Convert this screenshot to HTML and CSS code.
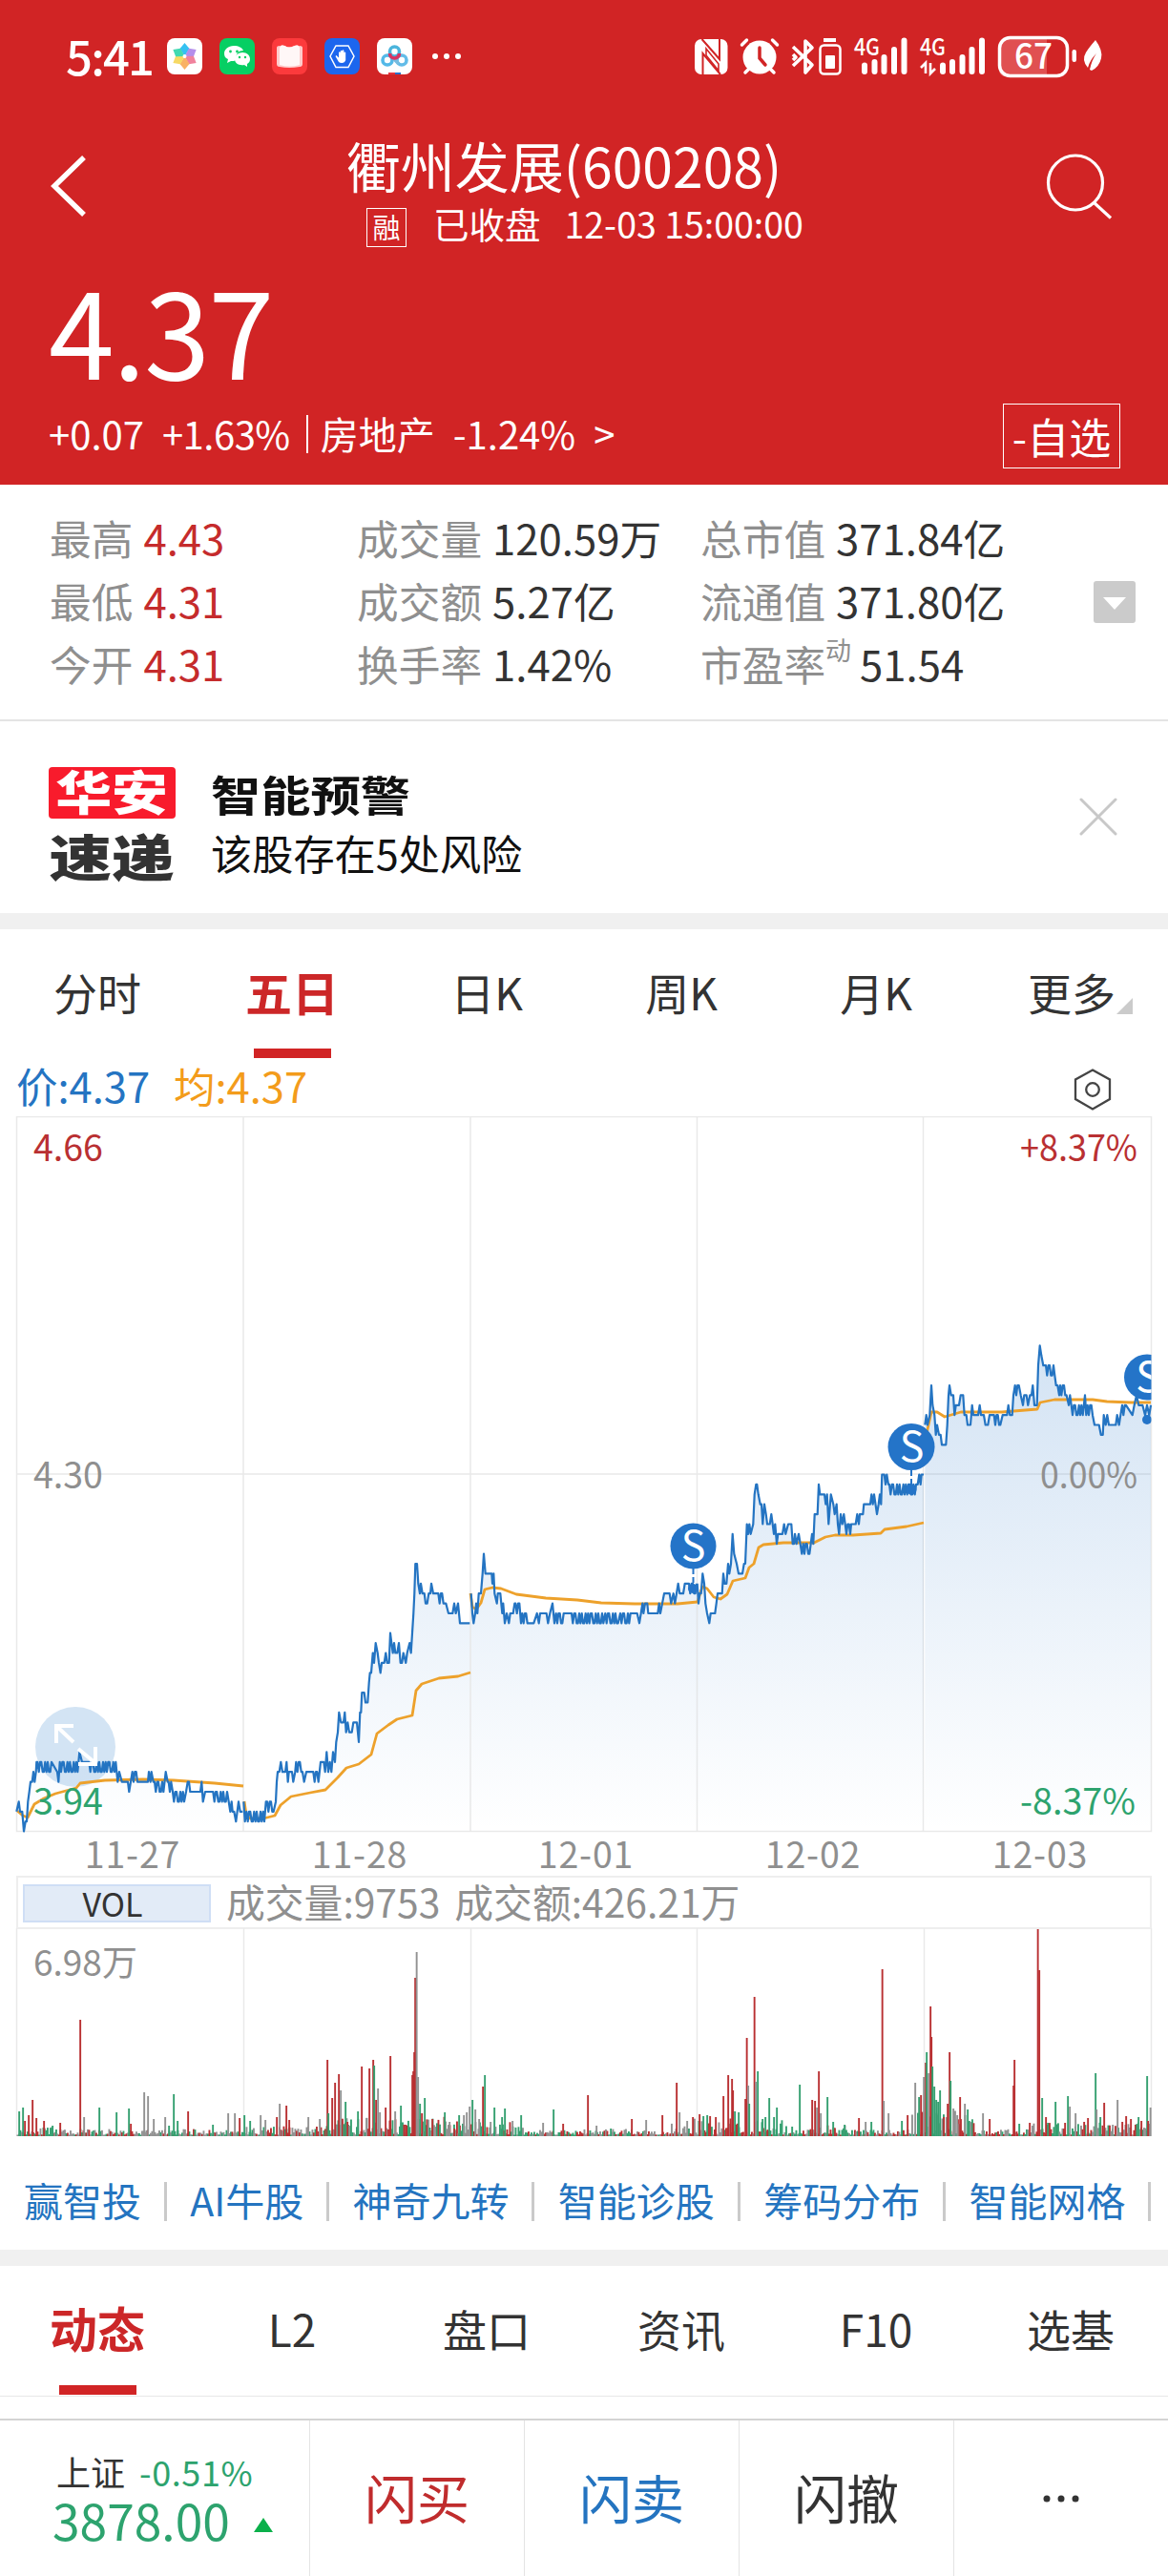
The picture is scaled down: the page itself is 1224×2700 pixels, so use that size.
FILE: index.html
```html
<!DOCTYPE html>
<html lang="zh-CN">
<head>
<meta charset="utf-8">
<title>衢州发展(600208)</title>
<link rel="stylesheet" href="styles.css">
</head>
<body>
<header class="hero">
  <div class="status">
    <span class="clock">5:41</span>
    <svg class="apps" width="315" height="40" viewBox="172 39 315 40">
      <rect x="175" y="40" width="37" height="38" rx="8" fill="#fff"/>
      <g transform="translate(193.500 59)" opacity=".85">
        <path d="M0 0L-5 -8L0 -14L5 -8Z" fill="#12b7f0"/>
        <path d="M0 0L-5 -8L0 -14L5 -8Z" fill="#a77be8" transform="rotate(60)"/>
        <path d="M0 0L-5 -8L0 -14L5 -8Z" fill="#ee6d8c" transform="rotate(120)"/>
        <path d="M0 0L-5 -8L0 -14L5 -8Z" fill="#f9a54a" transform="rotate(180)"/>
        <path d="M0 0L-5 -8L0 -14L5 -8Z" fill="#f5d34a" transform="rotate(240)"/>
        <path d="M0 0L-5 -8L0 -14L5 -8Z" fill="#1fd3a5" transform="rotate(300)"/>
        <circle r="2" fill="#fff"/>
      </g>
      <rect x="230" y="40" width="37" height="38" rx="8" fill="#06cf63"/>
      <path d="M245 48c-6 0-10 4-10 8 0 3 1 5 4 6l-1 4 4-2c2 0 4 0 5-1 0-7 3-10 8-10-1-3-5-5-10-5z" fill="#fff"/>
      <path d="M254 55c5 0 8 3 8 7 0 2-1 4-3 5v3l-3-2c-6 1-10-2-10-6 0-4 4-7 8-7z" fill="#fff"/>
      <g fill="#06cf63"><circle cx="241.500" cy="54" r="1.400"/><circle cx="248.500" cy="54" r="1.400"/><circle cx="251" cy="60" r="1.200"/><circle cx="257" cy="60" r="1.200"/></g>
      <rect x="285" y="40" width="37" height="38" rx="8" fill="#fc3a3c"/>
      <path d="M290 50q0-2 3-2l2 1q1-2 4-1 3 3 9 0 3-1 4 1l2-1q3 0 3 2v17q0 3-3 3-11 2-21 0-3 0-3-3z" fill="#fcc" />
      <path d="M293 50q1-4 5-2 5 3 11 0 4-2 5 2v18q-10 3-21 0z" fill="#fff7f7"/>
      <rect x="340" y="40" width="37" height="38" rx="8" fill="#1c66ee"/>
      <path d="M352 48h13l6 11-6 11.500h-13l-6-11.500z" fill="none" stroke="#fff" stroke-width="1.500"/>
      <path d="M355 65l-3.500-6 1-1 2.500 2.500V55q1-1.500 1.800 0v4-5.500q1-1.500 1.800 0v5-5.500q1-1.500 1.800 0v6-4q1-1.200 1.800 0v8q-1 3-4 3-2 0-3.200-1z" fill="#fff"/>
      <rect x="395" y="40" width="37" height="38" rx="8" fill="#fff"/>
      <g fill="none" stroke-width="3.600"><circle cx="406" cy="63" r="5" stroke="#54b9e8"/><circle cx="421" cy="63" r="5" stroke="#62bce8"/><path d="M409 58l9 9" stroke="#77bce0"/><circle cx="413.500" cy="54" r="5" stroke="#4ab4dc"/><path d="M408.500 56a5 5 0 0 0 10 0" stroke="#d93462"/></g>
      <path d="M407 76h7v2h-7z" fill="#e4343c"/><path d="M414 76h6v2h-6z" fill="#2770c9"/>
      <g fill="#fff"><circle cx="456" cy="59" r="3"/><circle cx="468" cy="59" r="3"/><circle cx="480" cy="59" r="3"/></g>
    </svg>
    <svg class="system" width="436" height="46" viewBox="724 37 436 46">
      <rect x="728" y="41" width="34.500" height="37" rx="7" fill="#fff"/>
      <path d="M735.500 41L754 62V41M736.500 78V56L755 78" fill="none" stroke="#d12425" stroke-width="2"/>
      <path d="M740 51l13 16v7l-13-16z" fill="#fff" stroke="#d12425" stroke-width="1.600"/>
      <g stroke="#fff" fill="none" stroke-linecap="round"><circle cx="796" cy="60" r="17.500" fill="#fff" stroke="none"/><path d="M777.500 47l5-5M814.500 47l-5-5M781 76l4-4M811 76l-4-4" stroke-width="3.500"/><path d="M796 50v11l6 7" stroke="#d12425" stroke-width="3.500"/></g>
      <path d="M831 49l20 19-7 8V43l7 7-20 19M831 57l3 3-3 3" fill="none" stroke="#fff" stroke-width="3.600" stroke-linejoin="round"/>
      <path d="M863 40h13v4h-13z" fill="#fff"/><rect x="859.500" y="47.500" width="21" height="30" rx="4" fill="none" stroke="#fff" stroke-width="2.500"/><rect x="865" y="58" width="10" height="14" rx="1" fill="#fff"/>
      <text x="895" y="58" class="net" textLength="27" lengthAdjust="spacingAndGlyphs">4G</text>
      <text x="964" y="58" class="net" textLength="27" lengthAdjust="spacingAndGlyphs">4G</text>
      <g stroke="#fff" stroke-width="6" stroke-linecap="round"><path d="M906 68.500V75M916.500 65V75M926.500 60V75M937 52V75M947.500 42.500V75M988 68.500V75M998 65V75M1008.500 60V75M1018.500 52V75M1029 42.500V75"/></g>
      <path d="M965 71l5-5v11M980 72l-5 5v-11" fill="none" stroke="#fff" stroke-width="2.600"/>
      <path d="M1053 40h44v40h-44q-6 0-6-8V48q0-8 6-8z" fill="#e05051"/>
      <rect x="1047.500" y="39.500" width="71" height="40" rx="11" fill="none" stroke="#fff" stroke-width="3.500"/>
      <text x="1063" y="72" class="charge" textLength="40" lengthAdjust="spacingAndGlyphs">67</text>
      <rect x="1123.500" y="52" width="4.500" height="13" rx="2.200" fill="#fff"/>
      <path d="M1148 42q8 11 6 19-2 9-10 13l-2-1q2-10 7-17-7 7-9 15-7-8-2-16 3-5 10-13z" fill="#fff"/>
    </svg>
  </div>
  <nav class="bar">
    <svg class="back" width="44" height="70" viewBox="50 160 44 70"><path d="M88 165L57 195l31 30" fill="none" stroke="#fff" stroke-width="5.500"/></svg>
    <div class="heading">
      <h1>衢州发展(600208)</h1>
      <p><i>融</i><span>已收盘</span><span>12-03 15:00:00</span></p>
    </div>
    <svg class="search" width="76" height="76" viewBox="1094 156 76 76"><g fill="none" stroke="#fff" stroke-width="3.200"><circle cx="1127" cy="191.500" r="28.500"/><path d="M1146 212l18 16.500"/></g></svg>
  </nav>
  <div class="price">4.37</div>
  <div class="change"><span>+0.07</span><span class="pct">+1.63%</span><b></b><span>房地产</span><span>-1.24%</span><span>&gt;</span><button>-自选</button></div>
</header>

<section class="stats">
  <dl>
    <div><dt>最高</dt><dd class="up">4.43</dd></div>
    <div><dt>最低</dt><dd class="up">4.31</dd></div>
    <div><dt>今开</dt><dd class="up">4.31</dd></div>
  </dl>
  <dl>
    <div><dt>成交量</dt><dd>120.59万</dd></div>
    <div><dt>成交额</dt><dd>5.27亿</dd></div>
    <div><dt>换手率</dt><dd>1.42%</dd></div>
  </dl>
  <dl>
    <div><dt>总市值</dt><dd>371.84亿</dd></div>
    <div><dt>流通值</dt><dd>371.80亿</dd></div>
    <div><dt>市盈率<sup>动</sup></dt><dd>51.54</dd></div>
  </dl>
  <svg class="expand" width="44" height="44" viewBox="0 0 44 44"><rect width="44" height="44" rx="3" fill="#cbcbcb"/><path d="M10 17h24L22 30z" fill="#fff"/></svg>
</section>

<section class="alert">
  <div class="logo"><span class="logo-a"><em>华安</em></span><span class="logo-b"><em>速递</em></span></div>
  <div class="alert-text"><h2><em>智能预警</em></h2><p>该股存在5处风险</p></div>
  <svg class="close" width="40" height="40" viewBox="0 0 40 40"><path d="M2 2l36 36M38 2L2 38" stroke="#c8c8c8" stroke-width="3" stroke-linecap="round"/></svg>
</section>

<nav class="tabs">
  <a>分时</a><a class="on">五日</a><a>日K</a><a>周K</a><a>月K</a><a class="more">更多<svg width="17" height="17" viewBox="0 0 17 17"><path d="M17 0v17H0z" fill="#cbcbcb"/></svg></a>
</nav>
<div class="legend"><span class="now">价:4.37</span><span class="avg">均:4.37</span>
  <svg width="42" height="46" viewBox="0 0 42 46"><g fill="none" stroke="#444" stroke-width="2.300"><path d="M21 2.500L39 12.500v20.500L21 43.500 3 33V12.500z"/><circle cx="21" cy="23" r="6.800"/></g></svg>
</div>
<svg id="trend" class="chart" width="1224" height="796" viewBox="0 1170 1224 796">
  <defs>
    <linearGradient id="fade" gradientUnits="userSpaceOnUse" x1="0" y1="1410" x2="0" y2="1919"><stop offset="0" stop-color="#2474c8" stop-opacity=".2"/><stop offset="1" stop-color="#2474c8" stop-opacity="0"/></linearGradient>
    <clipPath id="plot"><rect x="17" y="1170" width="1189.500" height="750"/></clipPath>
  </defs>
  <g class="grid"><path d="M17.500 1170.500h1189v749h-1189zM255 1170v749M493 1170v749M730.500 1170v749M967.500 1170v749M17 1545h1189" /></g>
  <circle cx="79" cy="1831" r="42" fill="#d3e4f4"/>
  <g id="lines"></g>
  <g clip-path="url(#plot)" class="marks">
    <path d="M726.500 1644v20M955 1541v20" class="drop"/>
    <circle cx="726.500" cy="1620.500" r="24"/><circle cx="955" cy="1516.500" r="24.500"/><circle cx="1202" cy="1443.500" r="24"/>
    <circle cx="726" cy="1665" r="5"/><circle cx="955" cy="1561" r="5.500"/><circle cx="1202" cy="1488" r="5"/>
    <text x="726.500" y="1635.500">S</text><text x="955.500" y="1531.500">S</text><text x="1203" y="1458.500">S</text>
  </g>
  <path d="M77 1826l-18-17M59 1827v-18h18M82 1833l18 15M100 1831v18h-18" fill="none" stroke="#fff" stroke-width="4"/>
  <g class="scale">
    <text x="35" y="1217" class="r">4.66</text><text x="35" y="1560">4.30</text><text x="35" y="1902" class="g">3.94</text>
    <text x="1069" y="1217" class="r" textLength="123" lengthAdjust="spacingAndGlyphs">+8.37%</text><text x="1090" y="1560" textLength="102" lengthAdjust="spacingAndGlyphs">0.00%</text><text x="1069" y="1902" class="g" textLength="121" lengthAdjust="spacingAndGlyphs">-8.37%</text>
  </g>
  <g class="scale m"><text x="139" y="1958">11-27</text><text x="377" y="1958">11-28</text><text x="614" y="1958">12-01</text><text x="852" y="1958">12-02</text><text x="1090" y="1958">12-03</text></g>
</svg>
<div class="vol"><button>VOL</button><span>成交量:9753</span><span>成交额:426.21万</span></div>
<svg class="chart" width="1224" height="219" viewBox="0 2021 1224 219">
  <g class="grid"><path d="M17.500 2021v218M255.500 2021v218M493.500 2021v218M730.500 2021v218M968.500 2021v218M1206.500 2021v218"/></g>
  <g id="bars"></g>
  <text x="35" y="2071" class="volmax">6.98万</text>
</svg>
<nav class="links"><a>赢智投</a><a>AI牛股</a><a>神奇九转</a><a>智能诊股</a><a>筹码分布</a><a>智能网格</a></nav>
<nav class="tabs low"><a class="on">动态</a><a>L2</a><a>盘口</a><a>资讯</a><a>F10</a><a>选基</a></nav>
<footer>
  <div class="index"><p>上证 <span>-0.51%</span></p><p class="points">3878.00<svg width="20" height="15" viewBox="0 0 20 15"><path d="M10 0l10 15H0z" fill="#0bb04a"/></svg></p></div>
  <a class="buy">闪买</a><a class="sell">闪卖</a><a>闪撤</a><a class="dots"><svg width="40" height="10" viewBox="0 0 40 10"><g fill="#333"><circle cx="5" cy="5" r="3.500"/><circle cx="20" cy="5" r="3.500"/><circle cx="35" cy="5" r="3.500"/></g></svg></a>
</footer>
<script src="chart.js"></script>
</body>
</html>
```

FILE: styles.css
```css
* { box-sizing: border-box; margin: 0; padding: 0; }
body { width: 1224px; background: #fff; color: #333; font-family: "Noto Sans CJK SC", "Noto Sans", sans-serif; overflow-x: hidden; }
svg { display: block; flex: none; }
em, i { font-style: normal; }
button { font-family: inherit; color: inherit; background: none; }

.hero { height: 508px; background: #d12425; color: #fff; }
.status { height: 118px; display: flex; align-items: flex-start; padding-left: 69px; }
.clock { width: 103px; font-size: 49px; font-weight: 500; line-height: 115px; letter-spacing: -1.800px; }
.apps { margin-top: 39px; }
.system { margin: 37px 0 0 237px; overflow: visible; }
.net { font-size: 24px; font-weight: 500; fill: #fff; }
.charge { font-size: 36px; font-weight: 500; fill: #fff; }

.bar { height: 150px; display: flex; align-items: flex-start; padding: 16px 54px 0 50px; }
.back { margin-top: 26px; }
.search { margin: 22px 0 0 auto; }
.heading { width: 500px; margin-left: 247px; white-space: nowrap; }
.heading h1 { font-size: 57px; font-weight: 400; line-height: 76px; text-align: center; }
.heading p { display: flex; font-size: 37.500px; line-height: 47px; padding-left: 43px; }
.heading i { width: 42px; height: 41px; flex: none; margin: 8px 28px 0 0; border: 1.500px solid #fff; font-size: 29px; line-height: 37px; text-align: center; }
.heading span + span { margin-left: 25px; }

.price { height: 153px; padding-left: 51px; font-size: 124px; line-height: 153px; letter-spacing: -1.500px; }
.change { height: 70px; display: flex; padding-left: 51px; font-size: 40px; line-height: 67px; white-space: nowrap; }
.change span + span { margin-left: 19px; }
.change .pct { letter-spacing: -.500px; }
.change b { width: 2px; height: 40px; margin: 14px 13px 0 17px; background: #fff; }
.change button { width: 123px; height: 68px; margin: 2px 50px 0 auto; border: 1.500px solid #fff; font-size: 44px; line-height: 58px; }

.stats { height: 248px; display: grid; grid-template-columns: 322px 360px 412px 44px; padding: 22px 0 0 52px; border-bottom: 2px solid #e4e4e4; font-size: 43.700px; line-height: 66px; }
.stats dl div { display: flex; white-space: nowrap; }
.stats dt { color: #8f8f8f; margin-right: 11px; }
.stats dd.up { color: #c52b2c; }
.stats sup { font-size: 27px; line-height: 0; vertical-align: 22px; margin-right: -2px; }
.expand { margin-top: 79px; }

.alert { height: 218px; display: flex; border-bottom: 17px solid #f0f0f0; padding-left: 51px; color: #111; }
.logo { width: 133px; margin-top: 48px; font-weight: 900; text-align: center; }
.logo span { display: flex; justify-content: center; height: 54px; line-height: 48px; border-radius: 4px; font-size: 49px; }
.logo em { transform: scaleX(1.200); transform-origin: center; }
.logo .logo-a { background: #f81b2c; color: #fff; }
.logo .logo-b { margin-top: 14px; color: #333; font-size: 52px; line-height: 50px; }
.logo .logo-b em { transform: scaleX(1.260); }
.alert-text { margin-left: 37px; padding-top: 46px; }
.alert-text h2 { font-size: 44.500px; font-weight: 700; line-height: 60px; }
.alert-text em { display: inline-block; transform: scaleX(1.175); transform-origin: 0 50%; }
.alert-text p { font-size: 43.200px; line-height: 62px; }
.close { margin: 80px 53px 0 auto; }

.tabs { height: 135px; display: grid; grid-template-columns: repeat(6, 204px); font-size: 46px; line-height: 131px; text-align: center; }
.tabs a { display: flex; flex-direction: column; align-items: center; height: 135px; }
.tabs .on { color: #cc2728; font-weight: 700; font-size: 49px; line-height: 129px; }
.tabs .on::after { content: ""; width: 81px; height: 10px; margin-top: -4px; background: #d12425; }
.tabs .more { flex-direction: row; align-items: flex-start; padding-left: 57px; }
.more svg { margin: 72px 0 0 1px; }

.legend { height: 61px; display: flex; align-items: flex-start; padding: 0 58px 0 17px; font-size: 43.500px; line-height: 58px; }
.now { color: #2474c2; width: 165px; }
.avg { color: #f39c1b; }
.legend svg { margin: 10px 0 0 auto; }

.grid path { fill: none; stroke: #e9e9e9; stroke-width: 1.500px; }
.trend { fill: none; stroke: #2474c2; stroke-width: 2.200px; stroke-linejoin: round; }
.mean { fill: none; stroke: #eda12b; stroke-width: 2.800px; stroke-linejoin: round; }
.marks circle { fill: #2474c8; }
.marks text { fill: #fff; font-size: 43px; text-anchor: middle; }
.drop { fill: none; stroke: #2474c8; stroke-width: 2px; stroke-dasharray: 6 3; }
.scale { font-size: 37.500px; fill: #8f8f8f; }
.scale .r { fill: #b93032; }
.scale .g { fill: #2da36e; }
.m { text-anchor: middle; letter-spacing: .800px; }
.volmax { font-size: 37px; fill: #8f8f8f; }

.vol { height: 56px; width: 1190px; margin: 0 0 -1px 17px; display: flex; border: 2px solid #eeeeee; font-size: 40.800px; line-height: 49px; color: #8f8f8f; white-space: nowrap; }
.vol button { width: 197px; height: 40px; margin: 7px 11px 0 5px; background: #e2ebf7; border: 2px solid #cfdef5; color: #333; font-size: 34px; line-height: 32px; padding-right: 9px; }
.vol span { padding-left: 5px; }
.vol span + span { padding-left: 15px; }

.links { height: 118px; display: flex; align-items: flex-start; padding: 26px 0 0 25px; font-size: 41px; line-height: 78px; color: #2474c0; white-space: nowrap; }
.links a { display: flex; align-items: center; margin-right: 24.500px; }
.links a::after { content: ""; width: 3px; height: 41px; margin: 5px 0 0 23.800px; background: #cacaca; }

.low { height: 154px; border-top: 17px solid #f0f0f0; border-bottom: 1px solid #e8e8e8; }
.low .on { font-size: 50px; }

footer { height: 165px; margin-top: 23px; border-top: 2.500px solid #d4d4d4; display: grid; grid-template-columns: 324px repeat(4, 225px); font-size: 55px; }
footer a { display: flex; align-items: center; justify-content: center; border-left: 1.500px solid #e4e4e4; padding-bottom: 5px; }
footer .dots { padding-bottom: 0; }
footer .buy { color: #c02c2d; }
footer .sell { color: #2474c0; }
.index { padding: 30px 0 0 59px; font-size: 36px; line-height: 46px; white-space: nowrap; }
.index span, .index .points { color: #2da36e; }
.index span { margin-left: 7px; letter-spacing: .600px; }
.index .points { display: flex; margin-left: -4px; font-size: 51.500px; line-height: 56px; }
.points svg { margin: 26px 0 0 25px; }
```

FILE: chart.js
```js
// Prices are in cents. "x:price" is one point; "a~b:lo:hi" fills a range with ticks between two prices.
const days = [
  { x0: 0, pts: "52:396 59:397 63:396 70:396 75:394 80:395 84:395 88:397 92:398 96:399 101:399 105:400 109:399 113:400 115:401 118~165:400:401 180:400 184:399 188~246:400:401 250:402 258:401 275:401 280~366:400:401 370:399 375:400 383:399 402:399 406:398 411:399 416~434:399:400 438:399 465:399 468:400 473:399 476:400 482:399 486~515:398:399 521:400 527:399 530~541:398:399 543~580:397:398 585:398 590:399 594:399 598:398 630:398 634:399 638:397 645:398 665:398 670~715:397:398 719:397 724:396 728:397 731:396 736:396 742:395 750:397 755:396 763:396" },
  { x0: 0, pts: "766:397 770:395 775~832:395:396 836:397 840~863:396:397 867:397 870:399 873:400 878:400 883:401 888:400 897:400 901:401 905:399 908:400 918:400 922:399 928:400 931~952:400:401 956:399 963:400 980:400 985~1003:399:400 1008:401 1018:401 1022:400 1027:402 1032:400 1037:401 1042:400 1047:402 1053:401 1057:403 1062:404 1066:406 1072:405 1080:405 1084:406 1088:404 1093:405 1098:404 1106:404 1111:405 1122:405 1128:403 1132:406 1135:406 1138:408 1145:408 1149:407 1156:407 1160:409 1163:410 1167:410 1172:412 1176:411 1181:413 1187:412 1191:411 1196:410 1200:411 1208:411 1213:412 1217:411 1223:411 1227:414 1231:413 1235:412 1239:413 1243:412 1249:412 1254:413 1259:411 1264:411 1268:412 1276:411 1280:412 1288:413 1292:412 1296:414 1300:416 1303:418 1306:421 1311:421 1315:419 1320:418 1323:419 1328:418 1334:418 1338:417 1343:417 1348:418 1353:418 1356:419 1362:418 1374:418 1378~1397:417:418 1402:417 1410:416 1423:416 1428:417 1433:416 1440:417 1446:415 1477:415" },
  { x0: 400, pts: "281:418 285:416 289:415 294:416 297:417 301:416 305:418 312:418 317:420 321:422 326:420 346:420 348:419 352:420 355:418 362:417 365:418 373:418 379:416 382:417 387:415 393:416 400:415 404:416 413:416 418:417 421~436:416:417 438:415 442~465:415:416 478:415 488:416 494:415 498:416 518:416 523:415 529:416 537:417 543:415 548~572:415:416 593:416 597~700:415:416 703~745:415:416 750~785:415:416 803:416 810:415 815:416 820:417 823:416 828:417 835:417 838:416 868:416 872:417 876:416 882:417 888:418 905:418 910:417 917:418 922:417 927:418 932:419 937:418 948:418 953:419 962:419 966~990:418:419" },
  { x0: 400, pts: "992:419 996:417 1000:418 1004:418 1009:420 1014:419 1018:417 1023:416 1030:415 1034:416 1048:416 1052:417 1056:418 1064:418 1070:418 1074:420 1078:419 1084:419 1089:421 1093:420 1098:421 1103:424 1108:422 1116:421 1122:420 1134:420 1139:421 1143:421 1148:425 1152:424 1156:425 1160:424 1168:425 1172:428 1177:429 1180:429 1184:428 1190:427 1194:427 1198:425 1203:427 1208:426 1212:425 1220:425 1225:426 1229:425 1233:424 1237:425 1242:423 1246:424 1260:424 1265:425 1270:424 1278:425 1288:425 1292:423 1296:423 1299:424 1304:423 1311:424 1316:423 1321:422 1325~1348:422:423 1353:424 1357:423 1361:426 1370:426 1374:429 1378:428 1392:428 1396:427 1400:428 1405:425 1412:428 1420:427 1424:426 1430:427 1434:425 1438:424 1443:426 1448:425 1453:426 1457~1473:424:425 1476:425 1490:425 1495:426 1500:425 1503:426 1513:426 1516:427 1536:427 1540~1548:427:428 1557:426 1562:427 1566:428 1570:427 1573:430 1580:430 1584:429 1588:430 1593:429 1596~1680:428:429 1685:429 1690:430 1694:429 1697:430 1704:430" },
  { x0: 760, pts: "628:435 632:436 636:435 643:436 648:439 652:437 658:436 662:434 666:435 672:434 677:434 681:433 694:433 698:435 702:438 705:439 710:438 717:438 721:436 725:437 735:437 740:438 748:438 752:436 758:436 762:435 771:435 776:437 780:436 795:436 800:437 804:436 813:436 818:435 826:435 831:436 838:436 845~868:435:436 872:436 886:436 890:437 895:436 902:436 906:438 911~925:438:439 929:438 936:437 940:438 947:438 952:437 958:438 963:438 967:439 972:437 980:437 984:441 989:443 994:442 1000:441 1008~1036:440:441 1040:439 1045:439 1050:438 1053~1076:438:439 1080:437 1084:438 1088~1126:436:437 1131:438 1135:436 1139~1157:436:437 1161:435 1175:435 1181:434 1187:434 1190:436 1196:435 1201:436 1206:435 1228:435 1232:436 1238:435 1243:436 1248~1262:436:437 1280:436 1286:437 1293:438 1300:437 1312:437 1320:436 1326:437 1333:436 1338:437" }
];
const means = [
  "18,1898 24,1903 29,1905 36,1891 46,1885 58,1880 80,1874 84,1869 110,1866 150,1865 182,1866 225,1869 255,1872",
  "256,1888 258,1902 262,1906 276,1906 288,1903 294,1892 305,1883 325,1879 341,1876 354,1863 363,1853 376,1849 389,1839 395,1817 407,1808 416,1802 432,1798 436,1772 442,1765 460,1759 480,1757 493,1753",
  "493,1670 495,1684 499,1687 504,1680 508,1666 516,1664 525,1665 541,1671 572,1675 605,1677 630,1680 665,1681 710,1681 731,1679",
  "731,1679 736,1663 741,1665 748,1674 755,1676 762,1671 768,1657 781,1654 785,1643 790,1639 795,1622 800,1619 821,1617 853,1617 865,1611 875,1609 894,1609 923,1607 927,1603 950,1600 968,1596",
  "969,1512 976,1480 982,1480 990,1485 1007,1480 1050,1480 1087,1477 1090,1470 1105,1467 1145,1467 1160,1469 1185,1470 1206,1470"
];
const level = p => (1545.5 - (p - 430) * 10.39).toFixed(1);

function expand(day) {
  const out = [];
  for (const tok of day.pts.split(" ")) {
    const [pos, lo, hi] = tok.split(":");
    if (!pos.includes("~")) { out.push([day.x0 + pos / 3, level(+lo)]); continue; }
    const [a, b] = pos.split("~").map(Number);
    const pattern = [1, 0, 1, 1, 0, 0, 1, 0, 1, 0, 0, 1, 0];
    for (let x = a, i = 0; x <= b; x += 4, i++) out.push([day.x0 + x / 3, level(+(pattern[i % 13] ? hi : lo))]);
  }
  return out.map(([x, y]) => x.toFixed(1) + "," + y);
}

let lines = "";
days.forEach(day => {
  const p = expand(day);
  const first = p[0].split(",")[0], last = p[p.length - 1].split(",")[0];
  lines += `<polygon fill="url(#fade)" points="${first},1919 ${p.join(" ")} ${last},1919"/>`;
});
means.forEach(m => { lines += `<polyline class="mean" points="${m}"/>`; });
days.forEach(day => { lines += `<polyline class="trend" points="${expand(day).join(" ")}"/>`; });
document.getElementById("lines").innerHTML = lines;

// Turnover per minute: x, height, colour (r up, g down, n flat).
const peaks = `20,26,g 24,30,g 26,16,r 30,22,r 34,38,r 38,19,r 46,16,r 55,11,g 63,14,r 84,122,r 88,20,n 104,30,g 122,25,g 135,29,g 137,13,r 151,46,n 155,42,n 161,18,n 173,20,n 177,11,g 182,44,g 186,16,g 197,26,r 223,12,g 239,24,n 246,24,n 251,19,r 256,22,g 262,16,g 273,22,n 278,17,n 290,20,r 293,34,n 300,32,r 303,17,r 323,20,n 335,18,n
343,80,r 344,24,g 348,40,r 351,56,r 355,65,r 357,48,n 362,36,g 364,15,r 375,26,g 379,73,r 384,19,n 387,71,r 391,80,r 392,74,g 394,38,r 396,50,n 398,25,n 404,30,r 409,84,r 414,26,n 420,32,g 425,12,r 432,64,r 433,68,r 434,88,r 435,166,r 436.500,193,n 438,62,n 440,34,g 442,24,r 445,40,g 453,18,r 466,25,g 471,15,n 476,8,r 481,22,g 486,22,n 489,25,n 492,31,n 495,38,g 498,28,n 502,18,n 506,52,r 508,64,g 514,15,n 518,30,g 526,20,g 529,29,g 537,16,n 546,22,g 569,14,n 580,28,g 590,13,r
616,43,r 625,11,n 640,8,g 662,18,r 677,17,n 694,22,r 709,56,r 712,25,n 720,16,n 726,20,r 733,23,r 737,21,g 741,22,g 744,21,r 750,20,r 758,42,r 763,64,r 767,60,r 768,48,r 770,26,g 774,25,g 781,39,r 782.500,103,r 784,53,n 785,34,g 790.500,146,r 792,57,n 794,68,g 799,18,g 802,20,g 806,40,g 811,20,g 814,30,g 830,10,g 838,54,g 851,38,r 854,37,r 856,30,n 858,68,r 860,24,n 867,41,g 873,15,g 885,12,g 900,19,r 907,15,n 913,15,g 924.500,175,r 926,37,n 931,24,n 945,16,g 951,22,r 959,56,n 963,41,g 965,43,r 968,62,n 970,77,r 971,88,g 973,66,n 975,136,r 976,104,r 977,73,g 979,52,g 981,38,g 983,36,g 985,48,g 989,20,r 993,34,r 995,88,r 996,58,g 999,29,n 1003,22,n 1006,41,r 1011,34,n 1014,28,g 1030,24,n 1037,18,r
1062,53,r 1063,80,r 1068,13,g 1079,14,r 1087.500,217,r 1089,174,r 1092,40,g 1096,20,r 1098,14,g 1106,36,g 1116,14,r 1119,42,g 1121,31,n 1127,24,n 1136,15,r 1140,19,r 1148,66,g 1149,28,n 1153,20,g 1157,35,r 1166,12,n 1171,38,n 1176,15,r 1180,21,r 1185,18,r 1193,20,g 1196,16,r 1202,63,g 1203,16,r 1205.500,30,n`.split(/\s+/);
const ink = { r: "#b93032", g: "#35a070", n: "#929292" };
// Busy stretches of the sessions: from, to, typical height.
const busy = [[22, 55, 8], [255, 340, 9], [340, 480, 19], [480, 550, 14], [700, 830, 17], [850, 885, 10], [955, 1020, 25], [1080, 1206, 13]];
let seed = 11, bars = "";
const rnd = () => (seed = (seed * 16807) % 2147483647) / 2147483647;
const bar = (x, h, c) => { bars += `<rect x="${x.toFixed(1)}" y="${(2239 - h).toFixed(1)}" width="1.900" height="${h.toFixed(1)}" fill="${ink[c]}"/>`; };
for (let x = 17.5; x < 1205; x += 1.5) {
  const zone = busy.find(z => x >= z[0] && x < z[1]);
  const top = zone ? zone[2] : 6;
  bar(x, 1.5 + top * Math.pow(rnd(), 1.6), "nrgnrgn"[Math.floor(rnd() * 7)]);
}
peaks.forEach(s => { const [x, h, c] = s.split(","); bar(x - 0.8, +h, c); });
document.getElementById("bars").innerHTML = bars;
```
